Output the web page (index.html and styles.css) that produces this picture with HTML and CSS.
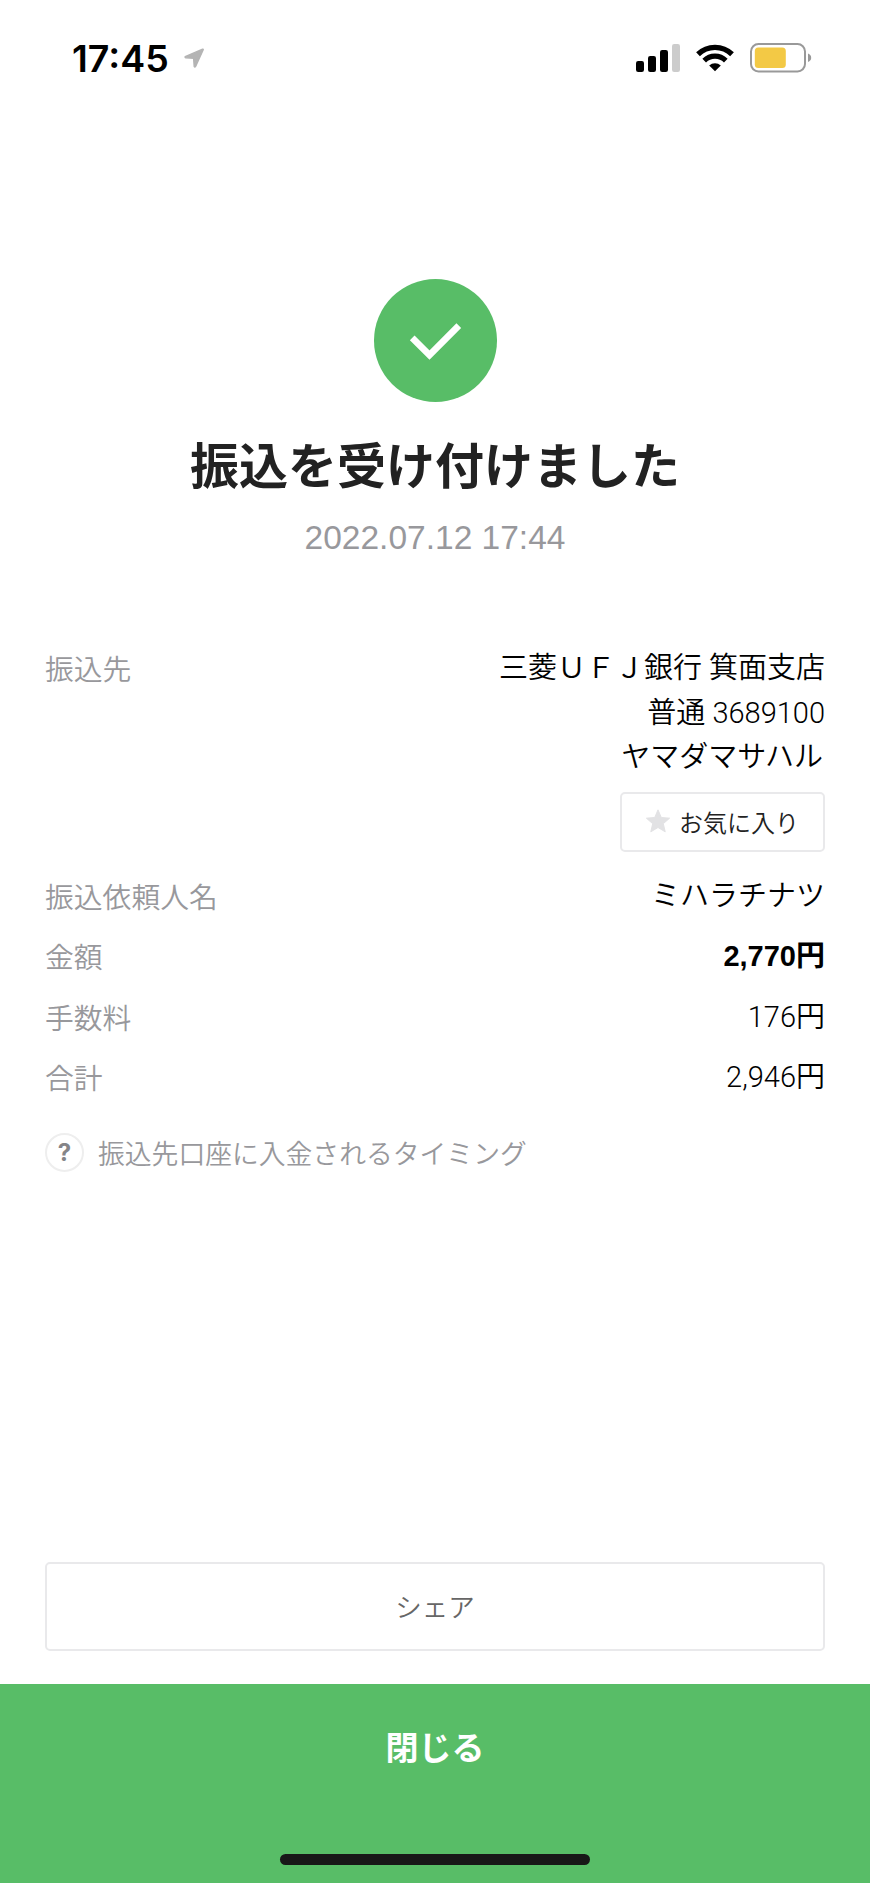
FILE: index.html
```html
<!DOCTYPE html>
<html lang="ja">

<head>
    <title>振込を受け付けました</title>
    <meta charset="UTF-8">
    <meta name="viewport" content="width=device-width, initial-scale=1">
    <link rel="stylesheet" href="styles.css">
</head>

<body>
    <header class="status-bar">
        <span class="time">17:45</span>
        <svg class="location" width="20" height="20" viewBox="0 0 20 20">
            <path d="M18.6 1.2 L1.2 8.6 Q0.8 9.6 1.8 9.7 L9.6 10.2 L10.2 18.4 Q10.8 19.6 11.6 18.4 L19.2 1.8 Q19.4 0.9 18.6 1.2Z" fill="#b4b4b4" stroke="#b4b4b4" stroke-width="1.4" stroke-linejoin="round" />
        </svg>
        <svg class="signal" width="44" height="28" viewBox="0 0 44 28">
            <rect x="0" y="17" width="8" height="11" rx="2.2" />
            <rect x="12" y="12" width="8" height="16" rx="2.2" />
            <rect x="24" y="6" width="8" height="22" rx="2.2" />
            <rect x="36" y="0" width="8" height="28" rx="2.2" fill="#cccccc" />
        </svg>
        <svg class="wifi" width="38" height="28" viewBox="0 0 38 28">
            <path d="M2 10.2 A24.5 24.5 0 0 1 36 10.2" fill="none" stroke="#000" stroke-width="5.4" />
            <path d="M8.2 16.6 A15.5 15.5 0 0 1 29.8 16.6" fill="none" stroke="#000" stroke-width="5.2" />
            <path d="M19 27.3 L13.2 21.5 A8.4 8.4 0 0 1 24.8 21.5Z" />
        </svg>
        <svg class="battery" width="62" height="30" viewBox="0 0 62 30">
            <rect x="1" y="1" width="54" height="27.5" rx="7.5" fill="none" stroke="#999999" stroke-width="2" />
            <rect x="4.8" y="4.6" width="31" height="20.4" rx="3.5" fill="#f3c945" />
            <path d="M58 10.6 Q61.2 11.8 61.2 14.8 Q61.2 17.8 58 19Z" fill="#999999" />
        </svg>
    </header>

    <main class="content">
        <section class="result">
            <svg class="check" width="123" height="123" viewBox="0 0 123 123">
                <circle cx="61.5" cy="61.5" r="61.5" fill="#58bd67" />
                <path d="M38.2 58.9 L55.5 76.2 L84.8 46.7" fill="none" stroke="#fff" stroke-width="6.6" />
            </svg>
            <h1>振込を受け付けました</h1>
            <p class="date">2022.07.12 17:44</p>
        </section>

        <dl class="details">
            <div class="row payee">
                <dt>振込先</dt>
                <dd>
                    三菱ＵＦＪ銀行 箕面支店<br>
                    普通 3689100<br>
                    <span class="payee-name">ヤマダマサハル</span>
                    <button class="favorite" type="button">
                        <svg width="24" height="24" viewBox="0 0 24 24">
                            <path d="M12 0.8 L15.3 8.5 L23.6 9.2 L17.3 14.7 L19.2 22.8 L12 18.5 L4.8 22.8 L6.7 14.7 L0.4 9.2 L8.7 8.5Z" fill="#e2e2e4" stroke="#e2e2e4" stroke-linejoin="round" />
                        </svg>
                        <span>お気に入り</span>
                    </button>
                </dd>
            </div>
            <div class="row">
                <dt>振込依頼人名</dt>
                <dd>ミハラチナツ</dd>
            </div>
            <div class="row">
                <dt>金額</dt>
                <dd class="amount">2,770円</dd>
            </div>
            <div class="row">
                <dt>手数料</dt>
                <dd>176円</dd>
            </div>
            <div class="row">
                <dt>合計</dt>
                <dd>2,946円</dd>
            </div>
        </dl>

        <div class="help">
            <span class="help-icon">?</span>
            <span>振込先口座に入金されるタイミング</span>
        </div>

        <button class="share" type="button">シェア</button>
    </main>

    <footer class="footer">
        <button class="close" type="button">閉じる</button>
        <div class="home-indicator"></div>
    </footer>
</body>

</html>
```
FILE: styles.css
```css
* {
    box-sizing: border-box;
}

body {
    margin: 0;
    height: 1883px;
    display: flex;
    flex-direction: column;
    background-color: #fff;
    color: #000;
    font-family: "Liberation Sans", "Noto Sans CJK JP", sans-serif;
}

h1, p, dl, dd {
    margin: 0;
}

button {
    background-color: #fff;
    border: 2px solid #e9e9eb;
    border-radius: 5px;
    font-family: inherit;
    padding: 0;
    cursor: pointer;
}

.status-bar {
    display: flex;
    align-items: center;
    height: 116px;
    padding: 0 58px 0 72px;
}

.time {
    width: 96px;
    font-family: Inter, sans-serif;
    font-size: 37.5px;
    font-weight: 600;
    white-space: nowrap;
}

.location {
    margin-left: 16px;
}

.signal {
    margin-left: auto;
}

.wifi {
    margin-left: 16px;
}

.battery {
    margin-left: 16px;
}

.content {
    flex: 1;
    display: flex;
    flex-direction: column;
    padding: 163px 45px 33px;
}

.result {
    text-align: center;
}

.check {
    display: block;
    margin: 0 auto;
}

h1 {
    margin-top: 33px;
    font-size: 49px;
    line-height: 64px;
    font-weight: bold;
    color: #222;
}

.date {
    margin-top: 19px;
    font-size: 33.5px;
    line-height: 40px;
    color: #98989c;
}

.details {
    margin-top: 88px;
    font-size: 28.8px;
    font-weight: 350;
}

.row {
    display: flex;
    justify-content: space-between;
    height: 60.3px;
    line-height: 44.6px;
}

.payee {
    height: 228px;
}

dt {
    padding-top: 2px;
    color: #98989c;
}

dd {
    font-family: Roboto, "Noto Sans CJK JP", sans-serif;
    font-size: 29px;
    font-weight: 350;
    text-align: right;
}

.payee-name {
    margin-right: 2px;
}

.amount {
    font-family: "Liberation Sans", "Noto Sans CJK JP", sans-serif;
    font-weight: bold;
}

.favorite {
    display: flex;
    align-items: center;
    justify-content: center;
    gap: 9px;
    width: 205px;
    height: 60px;
    margin: 12px 0 0 auto;
    padding-bottom: 1px;
    font-size: 24px;
    font-weight: 350;
    color: #222;
}

.help {
    display: flex;
    align-items: center;
    gap: 14px;
    height: 38px;
    margin-top: 18px;
    font-size: 26.8px;
    font-weight: 350;
    color: #98989c;
}

.help-icon {
    width: 39px;
    height: 39px;
    border: 2.5px solid #eeeeee;
    border-radius: 50%;
    font-family: Inter, sans-serif;
    font-size: 24px;
    font-weight: bold;
    line-height: 36px;
    text-align: center;
    color: #858588;
}

.share {
    height: 89px;
    margin-top: auto;
    padding-bottom: 2px;
    font-size: 26.5px;
    font-weight: 350;
    color: #666;
}

.footer {
    display: flex;
    flex-direction: column;
    align-items: center;
    justify-content: space-between;
    height: 199px;
    padding-bottom: 18px;
    background-color: #58bd67;
}

.close {
    width: 100%;
    height: 124px;
    border: none;
    background-color: transparent;
    color: #fff;
    font-size: 33px;
    font-weight: bold;
}

.home-indicator {
    width: 310px;
    height: 11px;
    border-radius: 6px;
    background-color: #181818;
}
```
